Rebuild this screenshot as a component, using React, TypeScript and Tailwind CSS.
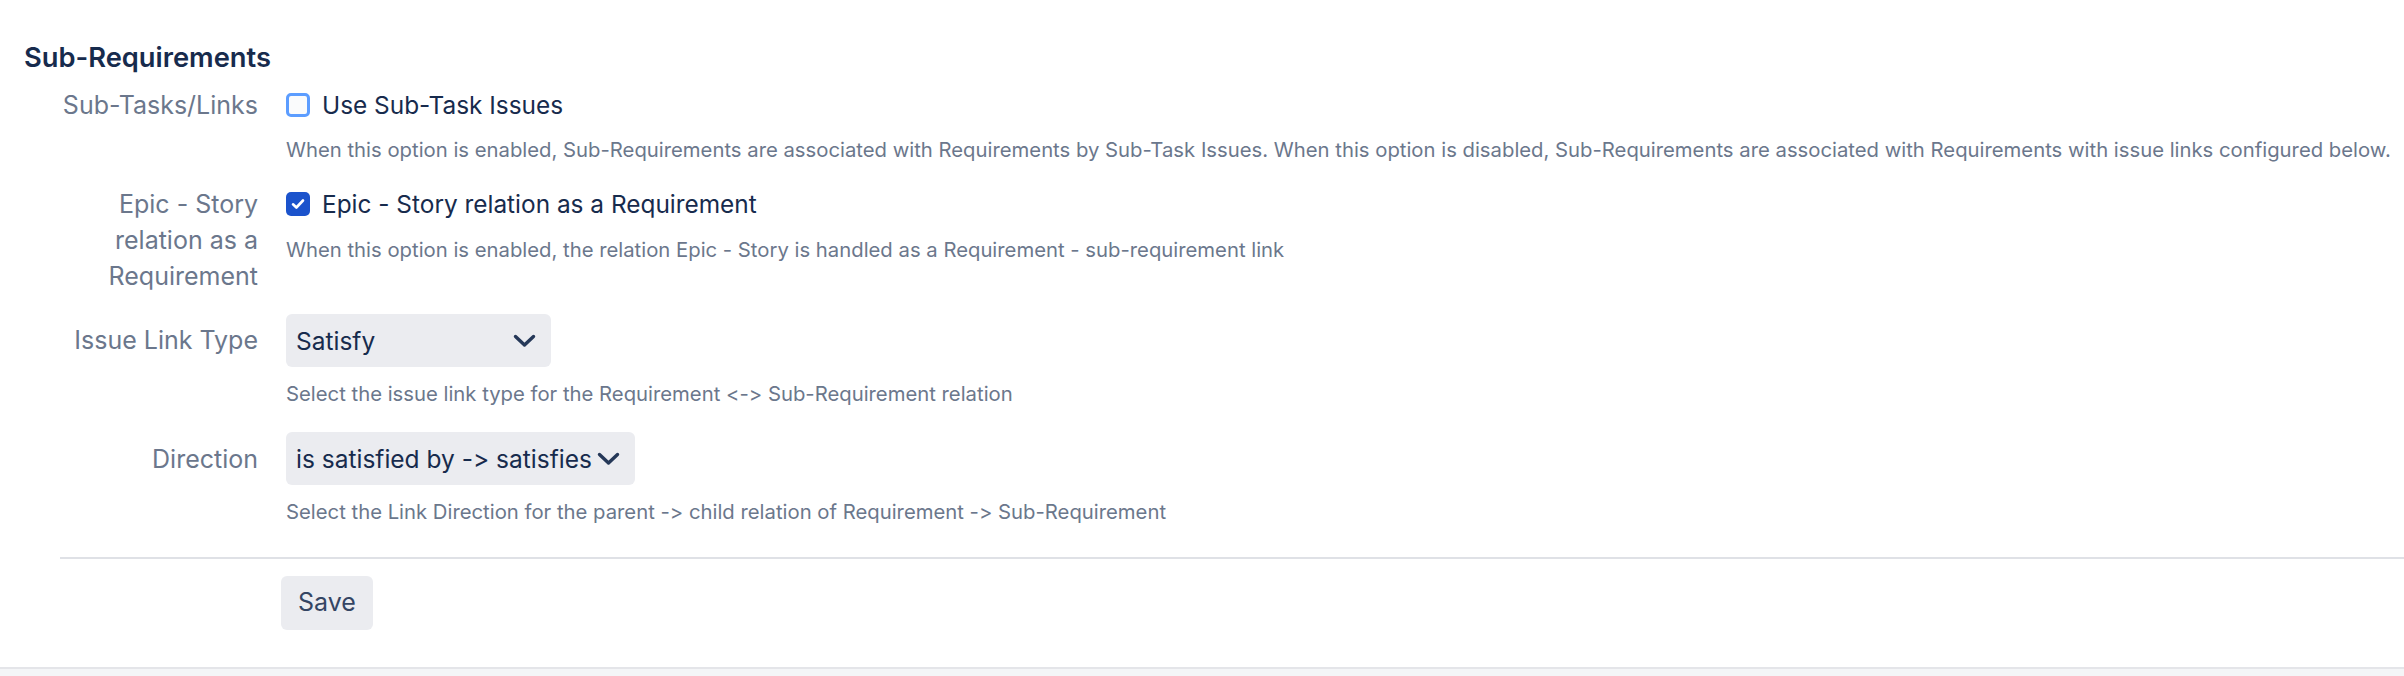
import { useState } from "react";

const FONT = "font-['Inter','Noto_Sans',sans-serif] [font-feature-settings:'calt'_0,'liga'_0]";

function ChevronDown() {
  return (
    <svg width="23" height="14" viewBox="0 0 23 14" fill="none" aria-hidden>
      <path
        d="M2.5 2.5 11.5 11 20.5 2.5"
        stroke="#253858"
        strokeWidth="3.4"
        strokeLinecap="round"
        strokeLinejoin="round"
      />
    </svg>
  );
}

function Checkbox({ checked, onToggle }: { checked: boolean; onToggle: () => void }) {
  return (
    <button
      type="button"
      aria-pressed={checked}
      onClick={onToggle}
      className={
        checked
          ? "flex size-[24px] shrink-0 items-center justify-center rounded-[5px] bg-[#1b53cc]"
          : "flex size-[24px] shrink-0 items-center justify-center rounded-[5px] border-[3px] border-[#5c9dff] bg-[#fafbfc]"
      }
    >
      {checked ? (
        <svg width="14" height="12" viewBox="0 0 14 12" fill="none" aria-hidden>
          <path
            d="M2 6.3 5.4 9.5 12 2.5"
            stroke="white"
            strokeWidth="2.6"
            strokeLinecap="round"
            strokeLinejoin="round"
          />
        </svg>
      ) : null}
    </button>
  );
}

function Select({ value, className }: { value: string; className: string }) {
  return (
    <div
      className={`flex h-[53px] items-center rounded-[6px] bg-[#ebecf0] pl-[10px] pr-[15px] text-[24.5px] leading-[36px] text-[#172b4d] ${className}`}
    >
      <span className="whitespace-nowrap">{value}</span>
      <ChevronDown />
    </div>
  );
}

function Row({
  label,
  children,
  className = "",
}: {
  label: React.ReactNode;
  children: React.ReactNode;
  className?: string;
}) {
  return (
    <div className={`flex items-start ${className}`}>
      <div className="w-[198px] shrink-0 text-right text-[25px] leading-[36px] text-[#6b778c]">
        {label}
      </div>
      <div className="ml-[28px] min-w-0 flex-1">{children}</div>
    </div>
  );
}

function Help({ children, className = "" }: { children: React.ReactNode; className?: string }) {
  return (
    <p className={`whitespace-nowrap text-[20.3px] leading-[28px] text-[#6b778c] ${className}`}>
      {children}
    </p>
  );
}

export default function App() {
  const [useSubTasks, setUseSubTasks] = useState(false);
  const [epicStory, setEpicStory] = useState(true);

  return (
    <div className={`flex min-h-[676px] w-full flex-col bg-white ${FONT}`}>
      <div className="flex-1 pt-[41px]">
        <h3 className="pl-[24px] text-[27.3px] font-semibold leading-[34px] text-[#172b4d]">
          Sub-Requirements
        </h3>

        <div className="pl-[60px]">
          <Row label="Sub-Tasks/Links" className="mt-[12px]">
            <div className="flex h-[36px] items-center gap-[12px]">
              <Checkbox checked={useSubTasks} onToggle={() => setUseSubTasks((v) => !v)} />
              <span className="text-[24.4px] leading-[36px] text-[#172b4d]">Use Sub-Task Issues</span>
            </div>
            <Help className="mt-[13px]">
              When this option is enabled, Sub-Requirements are associated with Requirements by
              Sub-Task Issues. When this option is disabled, Sub-Requirements are associated with
              Requirements with issue links configured below.
            </Help>
          </Row>

          <Row
            className="mt-[22px]"
            label={
              <>
                Epic - Story
                <br />
                relation as a
                <br />
                Requirement
              </>
            }
          >
            <div className="flex h-[36px] items-center gap-[12px]">
              <Checkbox checked={epicStory} onToggle={() => setEpicStory((v) => !v)} />
              <span className="text-[24.4px] leading-[36px] text-[#172b4d]">
                Epic - Story relation as a Requirement
              </span>
            </div>
            <Help className="mt-[14px]">
              When this option is enabled, the relation Epic - Story is handled as a Requirement -
              sub-requirement link
            </Help>
          </Row>

          <Row label={<div className="pt-[8px]">Issue Link Type</div>} className="mt-[20px]">
            <Select value="Satisfy" className="w-[265px] justify-between" />
            <Help className="mt-[13px]">
              Select the issue link type for the Requirement &lt;-&gt; Sub-Requirement relation
            </Help>
          </Row>

          <Row label={<div className="pt-[9px]">Direction</div>} className="mt-[24px]">
            <Select value="is satisfied by -> satisfies" className="w-[349px] justify-between" />
            <Help className="mt-[13px]">
              Select the Link Direction for the parent -&gt; child relation of Requirement -&gt;
              Sub-Requirement
            </Help>
          </Row>

          <div className="mt-[31px] border-t-2 border-[#dfe1e6]" />

          <div className="pb-[36px] pl-[221px] pt-[17px]">
            <button
              type="button"
              className="h-[54px] w-[92px] rounded-[6px] bg-[#ebecf0] text-[25px] text-[#344563]"
            >
              Save
            </button>
          </div>
        </div>
      </div>
      <div className="h-[9px] border-t-2 border-[#e4e5e9] bg-[#f4f5f7]" />
    </div>
  );
}
